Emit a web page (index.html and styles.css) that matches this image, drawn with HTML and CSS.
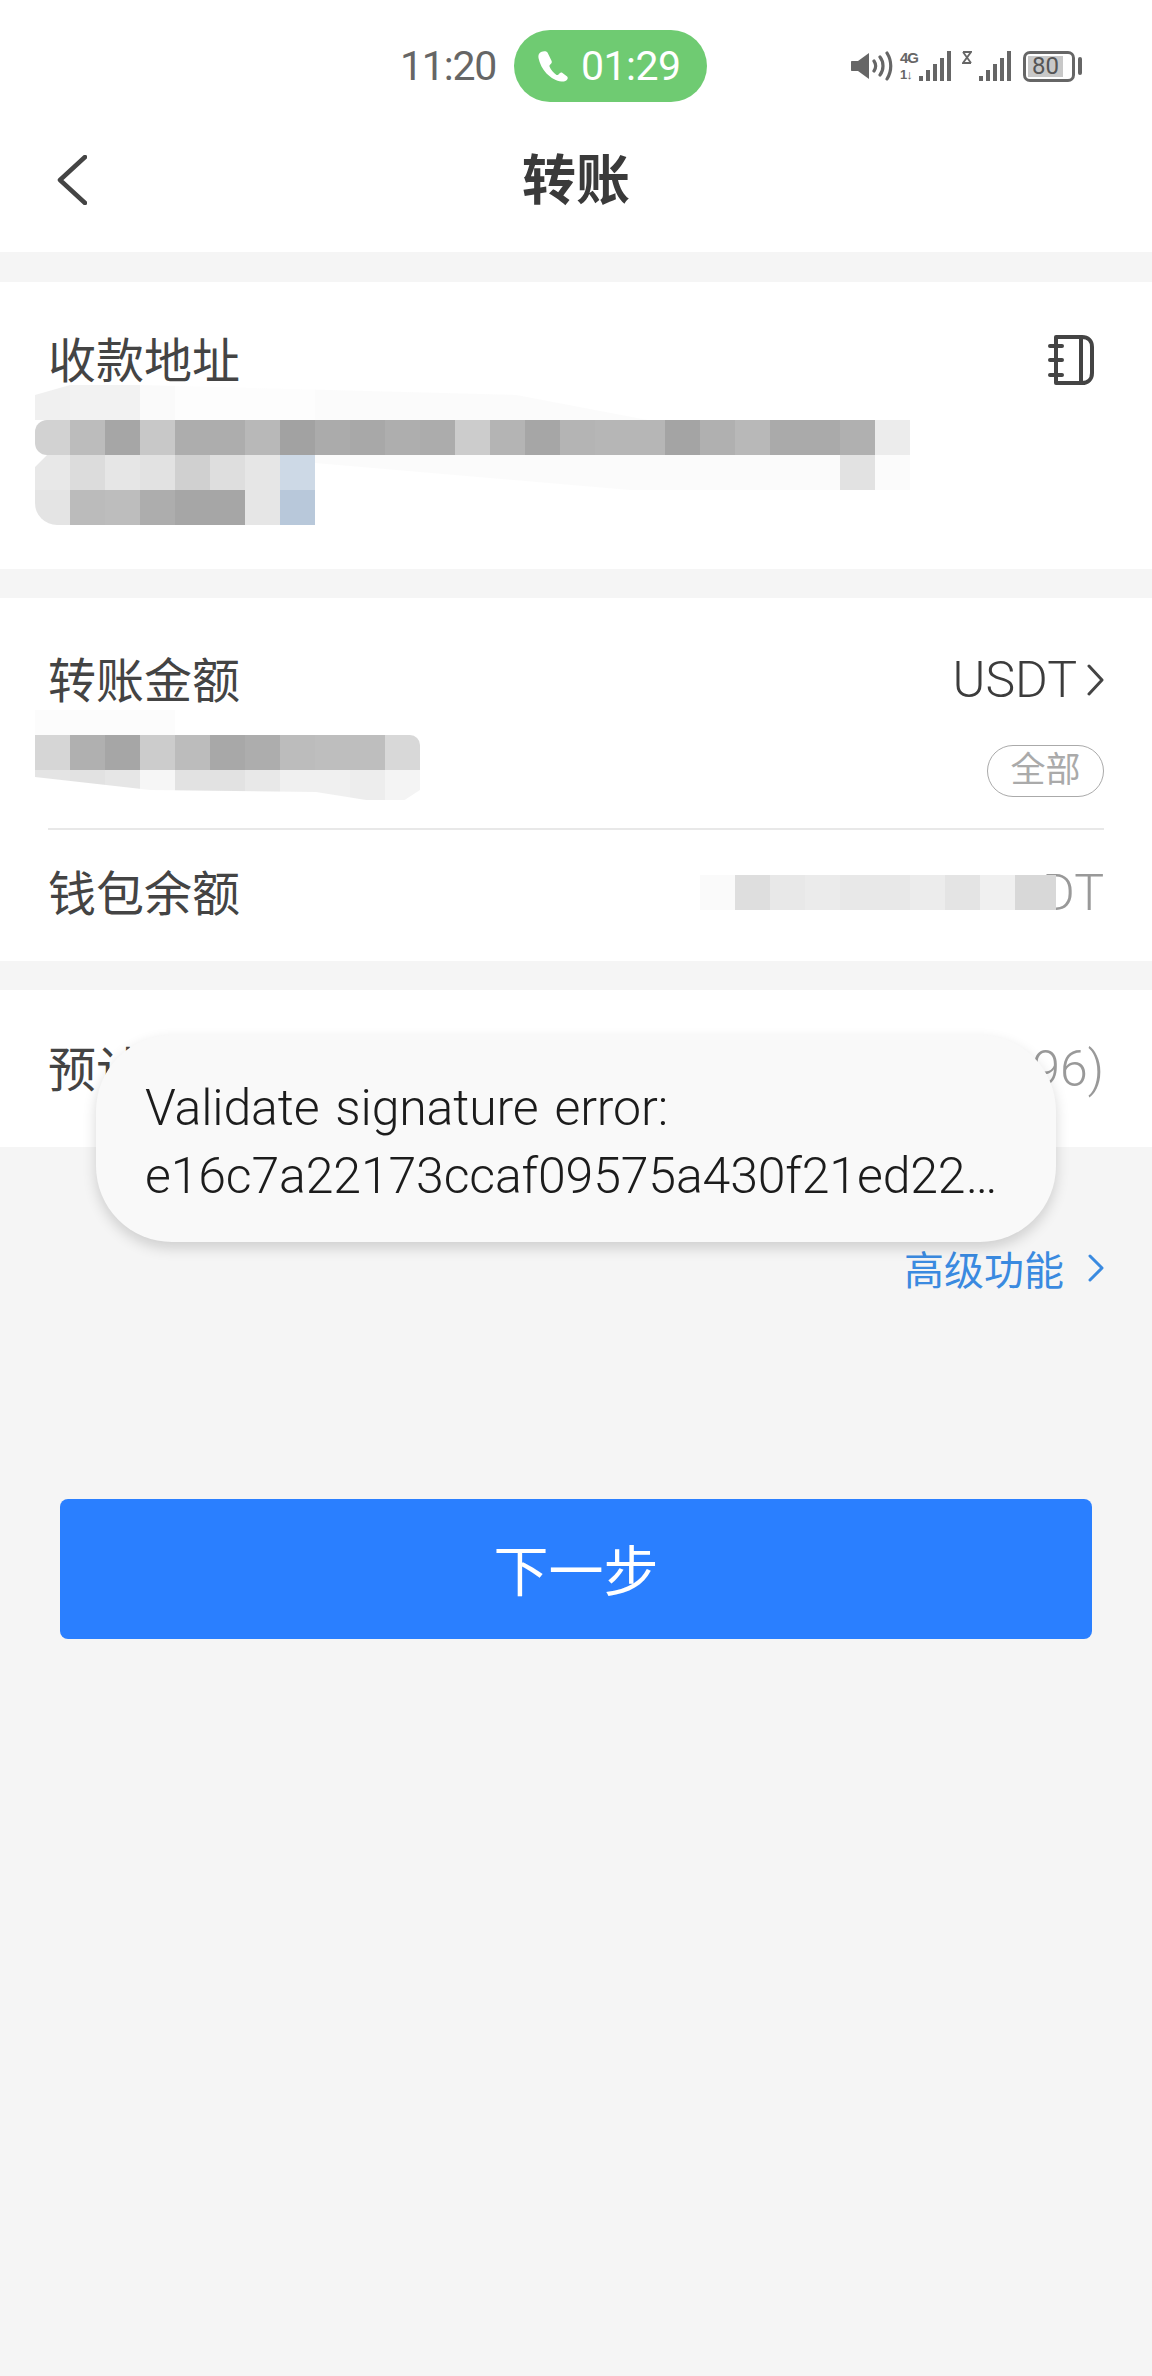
FILE: index.html
```html
<!DOCTYPE html>
<html lang="zh-CN">
  <head>
    <meta charset="UTF-8" />
    <meta name="viewport" content="width=device-width, initial-scale=1" />
    <title>转账</title>
    <link rel="stylesheet" href="styles.css">
  </head>
  <body>
    <div class="status-bar">
      <span class="clock">11:20</span>
      <span class="call-pill">
        <svg class="call-icon" viewBox="0 0 33 32"><path d="M4 2C2 3 1 5 1.500 8c1 5.500 4 11 8 15.500 4.500 4.500 10 7.500 15 8 2.500.2 5-.5 6-2.500.5-1 .2-2-.7-2.700l-4.300-3.300c-1-.6-2-.5-2.800.2l-1.500 1.500c-.5.4-1 .5-1.700.2-2.800-1.500-5.700-5-7-8.300-.2-.6-.1-1.100.3-1.500l1.400-1.500c.7-.8.8-1.800.3-2.800L10.500 2.500C9.300.8 6.500.8 4 2z" fill="#fff"/></svg>
        <span class="call-time">01:29</span>
      </span>
      <div class="status-icons">
        <svg class="speaker" width="42" height="30" viewBox="0 0 42 30">
          <path d="M1 10h6l11-8v26l-11-8H1c-.6 0-1-.4-1-1V11c0-.6.4-1 1-1z" fill="#666"/>
          <path d="M23 10c2 3 2 7 0 10M29 6c4 5 4 13 0 18M36 2c5 8 5 18 0 26" fill="none" stroke="#666" stroke-width="3.200" stroke-linecap="round"/>
        </svg>
        <span class="net">
          <span class="net-type">4G</span>
          <span class="net-arrows">1↓</span>
        </span>
        <svg class="bars" width="32" height="30" viewBox="0 0 32 30">
          <path d="M0 25h4v5H0zM7 19h4v11H7zM14 13h4v17h-4zM21 7h4v23h-4zM28 0h4v30h-4z" fill="#666"/>
        </svg>
        <svg class="hourglass" width="10" height="13" viewBox="0 0 10 13">
          <path d="M1 1h8L1 12h8" fill="none" stroke="#666" stroke-width="1.800"/>
          <path d="M1 1l8 11" fill="none" stroke="#666" stroke-width="1.800"/>
        </svg>
        <svg class="bars" width="32" height="30" viewBox="0 0 32 30">
          <path d="M0 25h4v5H0zM7 19h4v11H7zM14 13h4v17h-4zM21 7h4v23h-4zM28 0h4v30h-4z" fill="#666"/>
        </svg>
        <span class="battery">
          <span class="battery-body"><span class="battery-level">80</span></span>
          <span class="battery-tip"></span>
        </span>
      </div>
    </div>

    <header class="nav-bar">
      <svg class="back" width="30" height="50" viewBox="0 0 30 50"><path d="M28 2L3 25l25 23" fill="none" stroke="#444" stroke-width="4.500" stroke-linecap="round" stroke-linejoin="round"/></svg>
      <h1>转账</h1>
    </header>

    <section class="panel address-panel">
      <div class="row">
        <span class="label">收款地址</span>
        <svg class="book" width="46" height="52" viewBox="0 0 46 52">
          <path d="M8 3h26c6 0 10 4 10 10v26c0 6-4 10-10 10H8z" fill="none" stroke="#444" stroke-width="4" stroke-linejoin="round"/>
          <path d="M33 3v46M2 12h12M2 26h12M2 41h12" fill="none" stroke="#444" stroke-width="4" stroke-linecap="round"/>
        </svg>
      </div>
      <div class="address-blur">
        <div class="blur-row addr-1"></div>
        <div class="blur-row addr-2"></div>
        <div class="blur-row addr-3"></div>
        <div class="blur-row addr-4"></div>
      </div>
    </section>

    <section class="panel amount-panel">
      <div class="row">
        <span class="label">转账金额</span>
        <span class="unit">USDT
          <svg width="17" height="32" viewBox="0 0 17 32"><path d="M2 2l13 14L2 30" fill="none" stroke="#444" stroke-width="3" stroke-linecap="round" stroke-linejoin="round"/></svg>
        </span>
      </div>
      <div class="amount-row">
        <div class="amount-blur">
          <div class="blur-row amt-0"></div>
          <div class="blur-row amt-1"></div>
          <div class="blur-row amt-2"></div>
        </div>
        <span class="all-btn">全部</span>
      </div>
      <div class="balance-row">
        <span class="label">钱包余额</span>
        <span class="balance">
          <span class="balance-blur"></span>
          <span>DT</span>
        </span>
      </div>
    </section>

    <section class="panel fee-panel">
      <span class="label">预计</span>
      <span class="fee">96)</span>
    </section>

    <div class="advanced">
      <span>高级功能</span>
      <svg width="16" height="28" viewBox="0 0 16 28"><path d="M2 2l12 12L2 26" fill="none" stroke="#3a8ae0" stroke-width="3" stroke-linecap="round" stroke-linejoin="round"/></svg>
    </div>

    <button class="next-btn">下一步</button>

    <div class="toast">Validate signature error:<br>e16c7a22173ccaf09575a430f21ed22…</div>
  </body>
</html>
```

FILE: styles.css
```css
/* Basic Reset */
* {
  margin: 0;
  padding: 0;
  box-sizing: border-box;
}
body {
  position: relative;
  width: 1152px;
  min-height: 2376px;
  font-family: Roboto, "Noto Sans CJK SC", sans-serif;
  background-color: #f5f5f5;
  color: #444;
}

/* Status bar */
.status-bar {
  height: 132px;
  background: #fff;
  display: flex;
  align-items: center;
  padding: 0 70px 0 400px;
  color: #666;
}
.clock {
  font-size: 41px;
  letter-spacing: -1.2px;
  width: 114px;
}
.call-pill {
  width: 193px;
  height: 72px;
  border-radius: 36px;
  background: #6fcb72;
  color: #fff;
  font-size: 41px;
  display: flex;
  align-items: center;
  gap: 11px;
  padding-left: 23px;
}
.call-time {
  letter-spacing: -0.5px;
}
.call-icon {
  width: 33px;
  height: 32px;
}
.status-icons {
  margin-left: auto;
  display: flex;
  align-items: center;
  height: 32px;
}
.net {
  display: flex;
  flex-direction: column;
  justify-content: space-between;
  height: 30px;
  margin: 0 2px 0 7px;
  width: 17px;
  font-family: "Liberation Sans", sans-serif;
  font-weight: bold;
  line-height: 13px;
  white-space: nowrap;
}
.net-type {
  font-size: 15px;
  letter-spacing: -1px;
}
.net-arrows {
  font-size: 13px;
  letter-spacing: -1px;
}
.bars {
  flex: none;
}
.hourglass {
  margin: 0 7px 18px 11px;
}
.battery {
  margin-left: 12px;
  display: flex;
  align-items: center;
  gap: 3px;
}
.battery-body {
  width: 52px;
  height: 31px;
  border: 3px solid #666;
  border-radius: 7px;
  padding: 2px;
  display: flex;
}
.battery-level {
  width: 35px;
  background: #c8c8c8;
  font-size: 24px;
  line-height: 21px;
  text-align: center;
  color: #555;
}
.battery-tip {
  width: 4px;
  height: 18px;
  background: #666;
  border-radius: 2px;
}

/* Nav */
.nav-bar {
  height: 120px;
  background: #fff;
  position: relative;
  display: flex;
  justify-content: center;
  align-items: center;
  margin-bottom: 30px;
}
.nav-bar h1 {
  font-size: 54px;
  font-weight: bold;
  color: #3a3a3a;
  line-height: 60px;
  margin-bottom: 20px;
}
.back {
  position: absolute;
  left: 57px;
  top: 23px;
}

/* Panels */
.panel {
  background: #fff;
  margin-bottom: 29px;
}
.label {
  font-size: 48px;
  line-height: 64px;
  margin-bottom: -4px;
  color: #444;
}
.row {
  display: flex;
  justify-content: space-between;
  align-items: center;
  padding: 0 48px;
}
.blur-row {
  height: 35px;
}

.address-panel {
  height: 287px;
  padding-top: 48px;
}
.book {
  margin-right: 10px;
}
.address-blur {
  width: 875px;
  margin: -5px 0 0 35px;
}
.addr-1 {
  background: linear-gradient(to right, #f0f0f0 0 35px, #f2f2f2 0 105px, #fafafa 0 140px, #fdfdfd 0 280px, #fbfbfb 0 595px);
  clip-path: polygon(0 10px, 4% 0, 12% 0, 55% 10px, 70% 35px, 0 35px);
}
.addr-2 {
  background: linear-gradient(to right, #d2d2d2 0 35px, #bcbcbc 0 70px, #a6a6a6 0 105px, #c8c8c8 0 140px, #adadad 0 210px, #b8b8b8 0 245px, #a2a2a2 0 280px, #ababab 0 315px, #a8a8a8 0 350px, #aeaeae 0 385px, #acacac 0 420px, #ccc 0 455px, #b4b4b4 0 490px, #a6a6a6 0 525px, #b4b4b4 0 560px, #b6b6b6 0 630px, #a4a4a4 0 665px, #b0b0b0 0 700px, #b8b8b8 0 735px, #aaa 0 805px, #b0b0b0 0 840px, #ececec 0 875px);
  border-radius: 12px 0 0 12px;
}
.addr-3 {
  background: linear-gradient(to right, #e8e8e8 0 35px, #dcdcdc 0 70px, #e6e6e6 0 105px, #e2e2e2 0 140px, #d0d0d0 0 175px, #dedede 0 210px, #e6e6e6 0 245px, #cdd9e6 0 280px, #fbfbfb 0 805px, #e2e2e2 0 840px, #fbfbfb 0 875px);
  clip-path: polygon(12px 0, 100% 0, 100% 100%, 595px 100%, 280px 8px, 280px 100%, 0 100%, 0 12px);
}
.addr-4 {
  background: linear-gradient(to right, #e4e4e4 0 35px, #bbb 0 70px, #bdbdbd 0 105px, #adadad 0 140px, #a6a6a6 0 210px, #e6e6e6 0 245px, #b8c8da 0 280px, transparent 0);
  border-radius: 0 0 0 22px;
}

.amount-panel {
  height: 363px;
  padding-top: 52px;
}
.unit {
  font-size: 50px;
  line-height: 60px;
  font-weight: 300;
  display: flex;
  align-items: center;
  gap: 10px;
  color: #3c3c3c;
}
.amount-row {
  height: 120px;
  margin: 0 48px;
  border-bottom: 2px solid #e8e8e8;
  display: flex;
  justify-content: space-between;
  align-items: flex-start;
}
.amount-blur {
  width: 385px;
  margin-left: -13px;
}
.amt-0 {
  height: 25px;
  background: linear-gradient(to right, #fcfcfc 0 140px, #fff 0);
}
.amt-1 {
  background: linear-gradient(to right, #d6d6d6 0 35px, #b0b0b0 0 70px, #a6a6a6 0 105px, #ccc 0 140px, #bcbcbc 0 175px, #a8a8a8 0 210px, #adadad 0 245px, #bcbcbc 0 280px, #bebebe 0 350px, #d8d8d8 0 385px);
  border-radius: 0 10px 0 0;
}
.amt-2 {
  background: linear-gradient(to right, #e4e4e4 0 35px, #e2e2e2 0 70px, #e6e6e6 0 105px, #f6f6f6 0 140px, #e2e2e2 0 210px, #e8e8e8 0 245px, #f0f0f0 0 315px, #ededed 0 350px, #f4f4f4 0 385px);
  clip-path: polygon(0 0, 100% 0, 100% 20px, 96% 30px, 86% 30px, 73% 22px, 30% 20px, 0 7px);
}
.all-btn {
  width: 117px;
  height: 52px;
  margin-top: 35px;
  border: 1.500px solid #aaa;
  border-radius: 26px;
  font-size: 35px;
  line-height: 49px;
  text-align: center;
  color: #aaa;
}
.balance-row {
  height: 131px;
  margin: 0 48px;
  padding-bottom: 6px;
  display: flex;
  justify-content: space-between;
  align-items: center;
}
.balance {
  display: flex;
  align-items: center;
  font-size: 50px;
  font-weight: 300;
  color: #999;
}
/* covers the first letters of the balance */
.balance-blur {
  position: relative;
  z-index: 1;
  width: 356px;
  height: 35px;
  margin-right: -14px;
  background: linear-gradient(to right, #fafafa 0 35px, #dedede 0 70px, #e8e8e8 0 105px, #ebebeb 0 140px, #e8e8e8 0 210px, #ececec 0 245px, #e4e4e4 0 280px, #f0f0f0 0 315px, #d8d8d8 0 356px);
}

.fee-panel {
  height: 157px;
  margin-bottom: 0;
  padding: 0 48px;
  display: flex;
  justify-content: space-between;
  align-items: center;
}
.fee {
  font-size: 50px;
  font-weight: 300;
  color: #999;
}

.advanced {
  height: 50px;
  margin: 96px 48px 0 0;
  display: flex;
  justify-content: flex-end;
  align-items: center;
  gap: 24px;
  font-size: 40px;
  color: #3a8ae0;
}

.next-btn {
  display: block;
  width: 1032px;
  height: 140px;
  margin: 206px 0 0 60px;
  padding-bottom: 4px;
  border: none;
  border-radius: 8px;
  background: #2a7fff;
  color: #fff;
  font-family: inherit;
  font-size: 55px;
}

/* Toast over the form */
.toast {
  position: absolute;
  left: 96px;
  top: 1035px;
  width: 960px;
  height: 207px;
  padding: 39px 49px;
  border-radius: 76px;
  background: #f9f9f9;
  box-shadow: 0 6px 14px rgba(0, 0, 0, 0.16);
  font-size: 50px;
  line-height: 68px;
  font-weight: 300;
  letter-spacing: -0.15px;
  word-spacing: 4px;
  color: #1c1c1c;
  white-space: nowrap;
}
```
